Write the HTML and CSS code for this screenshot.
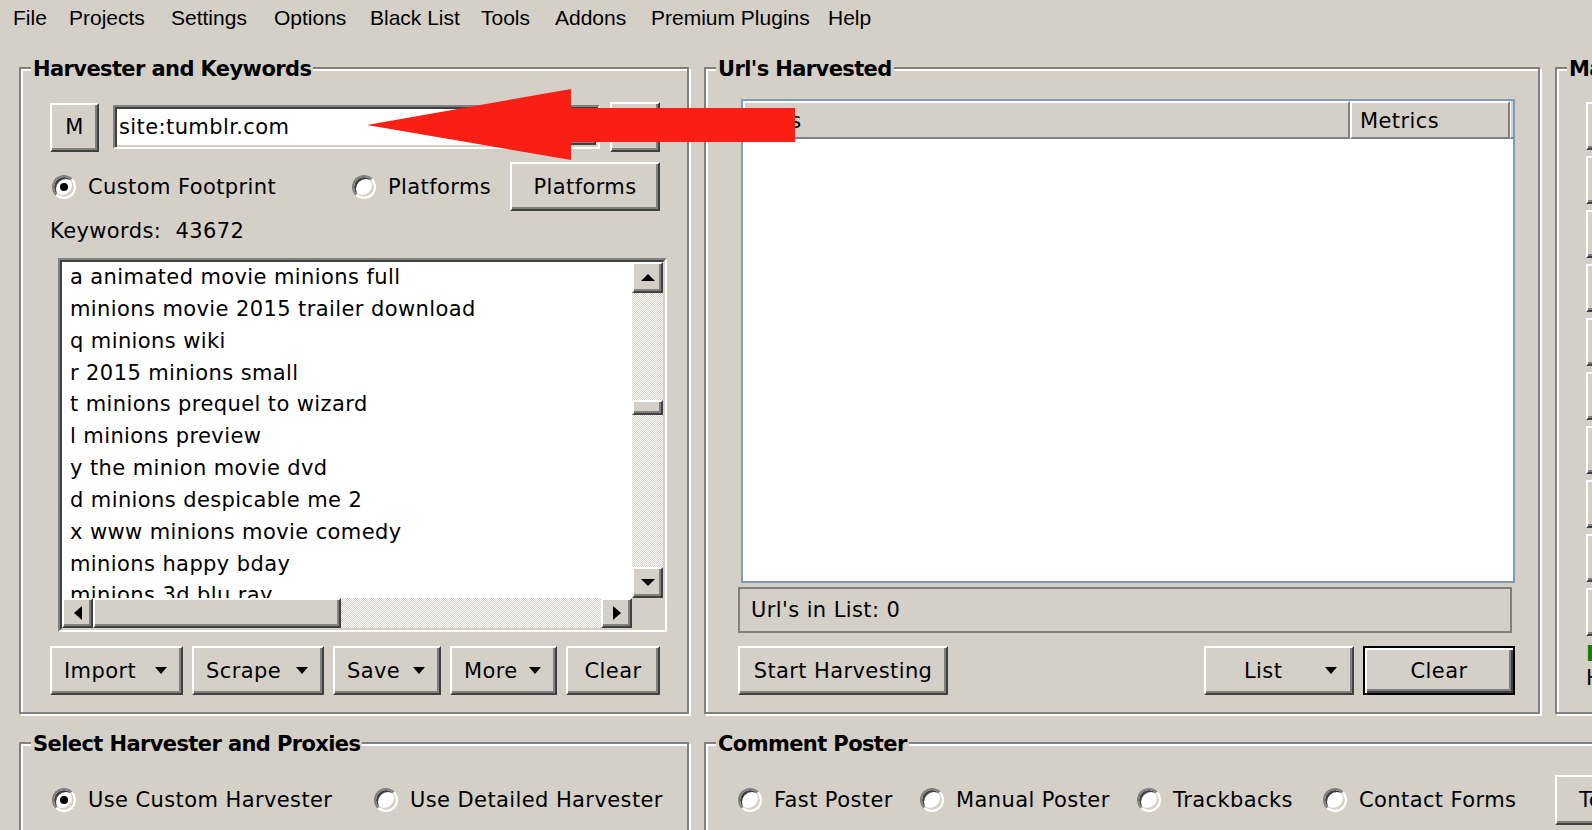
FILE: index.html
```html
<!DOCTYPE html>
<html lang="en">
<head>
    <meta charset="UTF-8">
    <title>ScrapeBox</title>
    <link rel="stylesheet" href="styles.css">
</head>
<body>
<div class="menubar">
    <span>File</span>
    <span>Projects</span>
    <span>Settings</span>
    <span>Options</span>
    <span>Black List</span>
    <span>Tools</span>
    <span>Addons</span>
    <span>Premium Plugins</span>
    <span>Help</span>
</div>

<div class="main">
    <!-- Harvester and Keywords -->
    <div class="group">
        <div class="group_title">Harvester and Keywords</div>
        <div class="group_body harvester_body">
            <div class="row toprow">
                <button class="btn mbtn">M</button>
                <div class="combo">
                    <span class="combo_text">site:tumblr.com</span>
                    <span class="btn combo_drop"></span>
                </div>
                <button class="btn blankbtn"></button>
            </div>
            <div class="row optrow">
                <label class="opt opt_custom"><span class="radio checked"></span>Custom Footprint</label>
                <label class="opt"><span class="radio"></span>Platforms</label>
                <button class="btn platbtn">Platforms</button>
            </div>
            <div class="kwcount">Keywords:&nbsp; 43672</div>
            <div class="listbox">
                <div class="listbox_inner">
                    <div class="list_lines">
                        <div>a animated movie minions full</div>
                        <div>minions movie 2015 trailer download</div>
                        <div>q minions wiki</div>
                        <div>r 2015 minions small</div>
                        <div>t minions prequel to wizard</div>
                        <div>l minions preview</div>
                        <div>y the minion movie dvd</div>
                        <div>d minions despicable me 2</div>
                        <div>x www minions movie comedy</div>
                        <div>minions happy bday</div>
                        <div>minions 3d blu ray</div>
                    </div>
                    <div class="vscroll">
                        <span class="btn sb_btn"><span class="tri tri_up"></span></span>
                        <div class="sb_track"><span class="btn vthumb"></span></div>
                        <span class="btn sb_btn"><span class="tri tri_down"></span></span>
                    </div>
                    <div class="hscroll">
                        <span class="btn sb_btn"><span class="tri tri_left"></span></span>
                        <span class="btn hthumb"></span>
                        <div class="sb_track"></div>
                        <span class="btn sb_btn"><span class="tri tri_right"></span></span>
                    </div>
                    <div class="sb_corner"></div>
                </div>
            </div>
            <div class="row btnrow">
                <button class="btn dropbtn w_import">Import <span class="caret"></span></button>
                <button class="btn dropbtn w_scrape">Scrape <span class="caret"></span></button>
                <button class="btn dropbtn w_save">Save <span class="caret"></span></button>
                <button class="btn dropbtn w_more">More <span class="caret"></span></button>
                <button class="btn w_clear">Clear</button>
            </div>
        </div>
    </div>

    <!-- Url's Harvested -->
    <div class="group">
        <div class="group_title">Url's Harvested</div>
        <div class="group_body urls_body">
            <div class="listview">
                <div class="lv_header">
                    <div class="lv_col lv_url">Url's</div>
                    <div class="lv_col lv_metrics">Metrics</div>
                    <div class="lv_rest"></div>
                </div>
            </div>
            <div class="url_count">Url's in List: 0</div>
            <div class="row btnrow">
                <button class="btn w_start">Start Harvesting</button>
                <button class="btn dropbtn w_list">List <span class="caret"></span></button>
                <button class="btn btn_default w_clear2">Clear</button>
            </div>
        </div>
    </div>

    <!-- Manage Lists (cut off) -->
    <div class="group">
        <div class="group_title">Manage Lists</div>
        <div class="group_body manage_body">
            <button class="btn side_btn">Remove / Filter</button>
            <button class="btn side_btn">Remove / Filter</button>
            <button class="btn side_btn">Remove / Filter</button>
            <button class="btn side_btn">Remove / Filter</button>
            <button class="btn side_btn">Remove / Filter</button>
            <button class="btn side_btn">Remove / Filter</button>
            <button class="btn side_btn">Remove / Filter</button>
            <button class="btn side_btn">Remove / Filter</button>
            <button class="btn side_btn">Remove / Filter</button>
            <button class="btn side_btn">Remove / Filter</button>
            <div class="status_green">Lists</div>
            <div>Harvested</div>
        </div>
    </div>

    <!-- Select Harvester and Proxies -->
    <div class="group">
        <div class="group_title">Select Harvester and Proxies</div>
        <div class="group_body setup_body">
            <div class="row radiorow">
                <label class="opt opt_useharv"><span class="radio checked"></span>Use Custom Harvester</label>
                <label class="opt"><span class="radio"></span>Use Detailed Harvester</label>
            </div>
        </div>
    </div>

    <!-- Comment Poster -->
    <div class="group poster">
        <div class="group_title">Comment Poster</div>
        <div class="group_body poster_body">
            <div class="poster_row">
                <label class="opt"><span class="radio"></span>Fast Poster</label>
                <label class="opt"><span class="radio"></span>Manual Poster</label>
                <label class="opt"><span class="radio"></span>Trackbacks</label>
                <label class="opt"><span class="radio"></span>Contact Forms</label>
                <button class="btn test_btn">Test</button>
            </div>
        </div>
    </div>
</div>

<svg class="arrow" width="428" height="71" viewBox="0 0 428 71">
    <polygon points="0,36 204,0 204,19 428,19 428,53 204,53 204,71" fill="#f91f15"/>
</svg>
</body>
</html>
```

FILE: styles.css
```css
body {
    margin: 0;
    width: 1592px;
    height: 830px;
    overflow: hidden;
    position: relative;
    background-color: #d4d0c8;
    font-family: "DejaVu Sans", "Liberation Sans", sans-serif;
    font-size: 21px;
    line-height: 24px;
    letter-spacing: 0.4px;
    color: #000;
}

button {
    font: inherit;
    letter-spacing: inherit;
    color: #000;
}

.menubar {
    display: grid;
    grid-template-columns: 56px 102px 103px 96px 111px 74px 96px 177px auto;
    height: 42px;
    padding: 6px 0 0 13px;
    box-sizing: border-box;
    font-family: "Liberation Sans", Arial, sans-serif;
    letter-spacing: 0;
    white-space: nowrap;
}

.main {
    display: grid;
    grid-template-columns: 670px 836px 300px;
    grid-template-rows: 647px 200px;
    column-gap: 15px;
    row-gap: 28px;
    padding: 25px 0 0 19px;
}

/* group boxes */
.group {
    border: 2px solid #808080;
    box-shadow: inset 2px 2px 0 #fff, 2px 2px 0 #fff;
    min-width: 0;
}

.group_title {
    display: table;
    margin: -12px 0 0 10px;
    padding: 0 2px;
    background-color: #d4d0c8;
    font-weight: bold;
    letter-spacing: -0.6px;
    white-space: nowrap;
}

.poster {
    grid-column: 2 / 4;
}

.harvester_body {
    padding: 21px 27px 0 29px;
}

.urls_body {
    padding: 18px 23px 0 32px;
}

.manage_body {
    padding: 21px 0 0 29px;
    white-space: nowrap;
}

.setup_body {
    padding: 29px 0 0 29px;
}

.poster_body {
    padding: 29px 0 0 30px;
}

.row {
    display: flex;
    align-items: center;
}

/* raised button */
.btn {
    display: inline-flex;
    align-items: center;
    justify-content: center;
    box-sizing: border-box;
    padding: 0;
    background-color: #d4d0c8;
    border: 2px solid;
    border-color: #fff #404040 #404040 #fff;
    box-shadow: inset -2px -2px 0 #808080;
    white-space: nowrap;
}

.btn_default {
    border-color: #000;
    box-shadow: inset 2px 2px 0 #fff, inset -2px -2px 0 #404040, inset -4px -4px 0 #808080;
}

.toprow {
    height: 50px;
}

.mbtn {
    width: 49px;
    height: 49px;
}

.combo {
    display: flex;
    align-items: center;
    box-sizing: border-box;
    width: 487px;
    height: 44px;
    margin-left: 14px;
    padding: 0 2px 0 4px;
    background-color: #fff;
    border: 2px solid;
    border-color: #808080 #fff #fff #808080;
    box-shadow: inset 2px 2px 0 #404040, inset -2px -2px 0 #d4d0c8;
}

.combo_text {
    flex: 1;
}

.combo_drop {
    width: 34px;
    height: 36px;
}

.blankbtn {
    width: 50px;
    height: 50px;
    margin-left: 10px;
}

.optrow {
    height: 49px;
    margin-top: 10px;
}

.opt {
    display: flex;
    align-items: center;
    gap: 12px;
    white-space: nowrap;
}

.opt_custom {
    width: 300px;
}

.opt_useharv {
    width: 322px;
}

.radio {
    display: inline-flex;
    align-items: center;
    justify-content: center;
    box-sizing: border-box;
    flex-shrink: 0;
    width: 24px;
    height: 24px;
    margin-left: 2px;
    border-radius: 50%;
    border: 2px solid;
    border-color: #808080 #fff #fff #808080;
    box-shadow: inset 2px 2px 0 #404040, inset -2px -2px 0 #d4d0c8;
    background-color: #fff;
}

.checked::after {
    content: "";
    width: 8px;
    height: 8px;
    border-radius: 50%;
    background-color: #000;
}

.platbtn {
    width: 150px;
    height: 49px;
    margin-left: auto;
}

.kwcount {
    margin-top: 8px;
}

/* keyword list */
.listbox {
    width: 609px;
    height: 374px;
    margin: 15px 0 0 8px;
    box-sizing: border-box;
    border: 2px solid;
    border-color: #808080 #fff #fff #808080;
}

.listbox_inner {
    display: grid;
    grid-template-columns: 570px 31px;
    grid-template-rows: 336px 30px;
    height: 100%;
    box-sizing: border-box;
    border: 2px solid;
    border-color: #404040 #d4d0c8 #d4d0c8 #404040;
}

.list_lines {
    overflow: hidden;
    padding-left: 8px;
    background-color: #fff;
    line-height: 31.85px;
    white-space: nowrap;
}

.vscroll {
    display: flex;
    flex-direction: column;
}

.hscroll {
    display: flex;
}

.sb_btn {
    width: 31px;
    height: 31px;
    flex-shrink: 0;
}

.hscroll .sb_btn {
    height: 30px;
}

.sb_track {
    flex: 1;
    background: repeating-conic-gradient(#fff 0 25%, #d4d0c8 0 50%) 0 0 / 2px 2px;
}

.vthumb {
    display: block;
    width: 31px;
    height: 15px;
    margin-top: 107px;
}

.hthumb {
    width: 248px;
    height: 30px;
    flex-shrink: 0;
}

.sb_corner {
    background-color: #d4d0c8;
}

.tri {
    width: 0;
    height: 0;
    border: 0 solid transparent;
}

.tri_up {
    border-width: 0 7px 7px;
    border-bottom-color: #000;
}

.tri_down {
    border-width: 7px 7px 0;
    border-top-color: #000;
}

.tri_left {
    border-width: 7px 8px 7px 0;
    border-right-color: #000;
}

.tri_right {
    border-width: 7px 0 7px 8px;
    border-left-color: #000;
}

/* buttons under the lists */
.btnrow {
    gap: 9px;
    height: 49px;
    margin-top: 14px;
}

.btnrow .btn {
    height: 49px;
}

.dropbtn {
    justify-content: space-between;
    padding: 0 14px 0 12px;
}

.caret {
    width: 0;
    height: 0;
    border-left: 6px solid transparent;
    border-right: 6px solid transparent;
    border-top: 7px solid #000;
}

.w_import { width: 133px; }
.w_scrape { width: 132px; }
.w_save { width: 108px; }
.w_more { width: 107px; }
.w_clear { width: 94px; }

/* url list */
.listview {
    width: 774px;
    height: 484px;
    margin-left: 3px;
    box-sizing: border-box;
    border: 2px solid #7f9db9;
    background-color: #fff;
}

.lv_header {
    display: flex;
    height: 38px;
    background-color: #d4d0c8;
}

.lv_col {
    box-sizing: border-box;
    padding-left: 8px;
    line-height: 36px;
    border: 2px solid;
    border-color: #fff #808080 #808080 #fff;
}

.lv_url {
    width: 607px;
}

.lv_metrics {
    width: 160px;
}

.lv_rest {
    flex: 1;
    border-left: 1px solid #fff;
    border-bottom: 2px solid #808080;
}

.url_count {
    width: 774px;
    height: 46px;
    margin-top: 4px;
    box-sizing: border-box;
    padding-left: 11px;
    border: 2px solid #808080;
    line-height: 42px;
}

.urls_body .btnrow {
    margin-top: 13px;
}

.w_start {
    width: 210px;
    margin-right: auto;
}

.w_list {
    width: 150px;
    padding: 0 15px 0 38px;
}

.w_clear2 {
    width: 152px;
}

/* right column */
.side_btn {
    display: flex;
    justify-content: flex-start;
    width: 150px;
    height: 48px;
    margin-bottom: 6px;
    padding-left: 20px;
}

.status_green {
    margin-top: 1px;
    color: #008000;
    font-weight: bold;
}

/* second row */
.radiorow {
    height: 30px;
}

.poster_row {
    display: grid;
    grid-template-columns: 182px 217px 186px 234px 120px;
    align-items: center;
    height: 30px;
}

.test_btn {
    justify-content: flex-start;
    height: 50px;
    margin: -10px 0;
    padding-left: 22px;
}

.arrow {
    position: absolute;
    left: 367px;
    top: 89px;
}
```
